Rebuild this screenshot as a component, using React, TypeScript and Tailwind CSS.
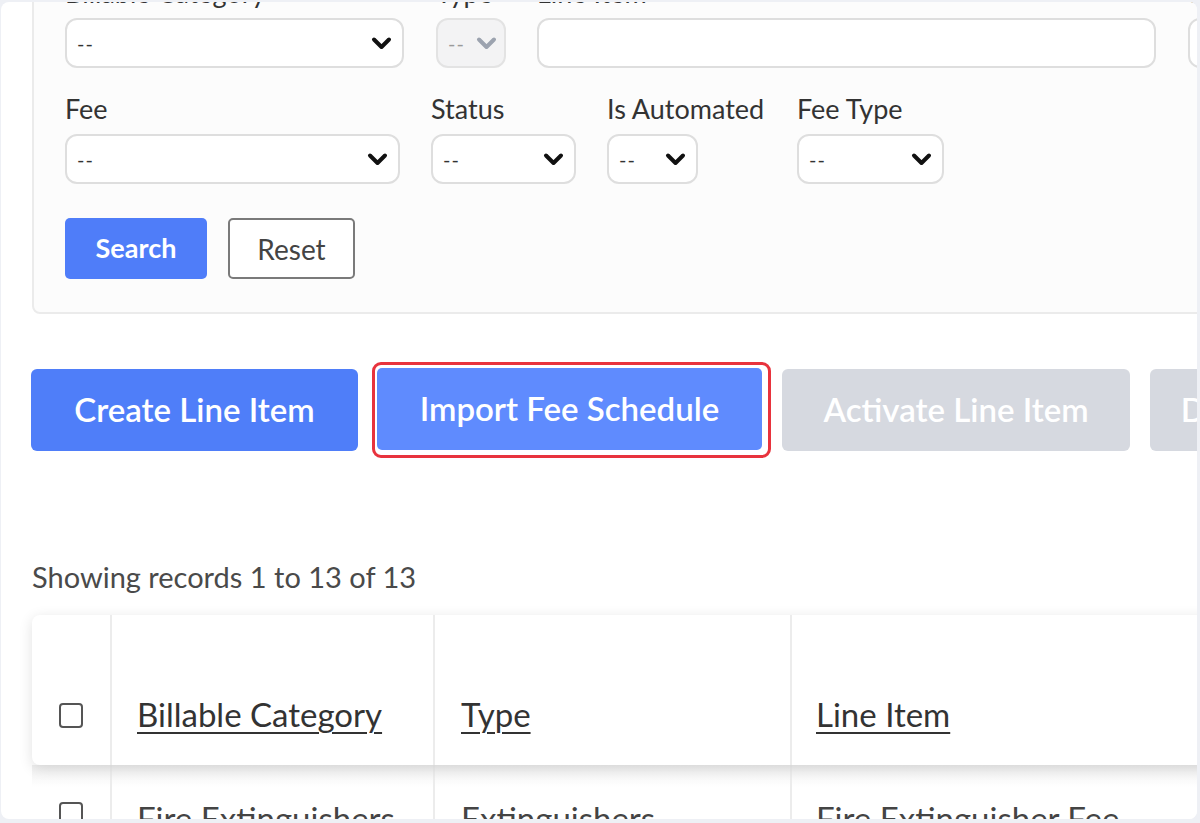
import React from 'react';

type SelectProps = {
  width: string;
  disabled?: boolean;
};

// chevron used by the select boxes
function Chevron({ muted = false }: { muted?: boolean }) {
  return (
    <svg width="21" height="14" viewBox="0 0 21 14" fill="none">
      <path
        d="M3 3.5l7.5 7.5 7.5-7.5"
        stroke={muted ? '#9ca3af' : '#111'}
        strokeWidth="4"
        strokeLinecap="round"
        strokeLinejoin="round"
      />
    </svg>
  );
}

function FakeSelect({ width, disabled = false }: SelectProps) {
  return (
    <div
      className={`${width} h-[50px] rounded-[12px] border-2 flex items-center justify-between pl-[10px] ${
        disabled
          ? 'pr-[7px] bg-[#f3f3f4] border-[#e3e3e3] text-[#9a9a9a]'
          : 'pr-[10px] bg-white border-[#dedede] text-[#333]'
      }`}
    >
      <span className="text-[20px] leading-none tracking-[1px]">--</span>
      <Chevron muted={disabled} />
    </div>
  );
}

function Field({ label, children, className = '' }: { label: string; children: React.ReactNode; className?: string }) {
  return (
    <div className={`flex flex-col ${className}`}>
      <div className="h-[30px] leading-[30px] text-[27px] text-[#333] mb-[10px] whitespace-nowrap">{label}</div>
      {children}
    </div>
  );
}

function Checkbox() {
  return <div className="w-[24px] h-[25px] rounded-[4px] border-2 border-[#555] bg-white" />;
}

export default function App() {
  return (
    <div className="w-[1200px] h-[823px] bg-[#eef0f5] pt-[2px] pl-[1px] pr-[3px] pb-[4px] overflow-hidden font-['Lato',sans-serif]">
      <div className="h-full bg-white rounded-[8px] overflow-hidden">
        {/* Filters */}
        <div className="ml-[31px] mt-[-42px] w-[1300px] bg-[#fcfcfc] border-2 border-[#ebebeb] rounded-[8px] pl-[31px] pt-[16px] pb-[33px]">
          <div className="flex">
            <Field label="Billable Category">
              <FakeSelect width="w-[339px]" />
            </Field>
            <Field label="Type" className="ml-[32px]">
              <FakeSelect width="w-[70px]" disabled />
            </Field>
            <Field label="Line Item" className="ml-[31px]">
              <div className="w-[619px] h-[50px] rounded-[12px] border-2 border-[#dedede] bg-white" />
            </Field>
            <Field label="Sort" className="ml-[32px]">
              <div className="w-[200px] h-[50px] rounded-[12px] border-2 border-[#dedede] bg-white" />
            </Field>
          </div>

          <div className="flex mt-[26px]">
            <Field label="Fee">
              <FakeSelect width="w-[335px]" />
            </Field>
            <Field label="Status" className="ml-[31px]">
              <FakeSelect width="w-[145px]" />
            </Field>
            <Field label="Is Automated" className="ml-[31px] w-[158px]">
              <FakeSelect width="w-[91px]" />
            </Field>
            <Field label="Fee Type" className="ml-[32px]">
              <FakeSelect width="w-[147px]" />
            </Field>
          </div>

          <div className="flex gap-[21px] mt-[34px]">
            <button className="w-[142px] h-[61px] rounded-[5px] bg-[#4f7df9] text-white text-[27px] font-bold">
              Search
            </button>
            <button className="w-[127px] h-[61px] rounded-[5px] border-2 border-[#7a7a7a] bg-white text-[#444] text-[28px]">
              Reset
            </button>
          </div>
        </div>

        {/* Bulk actions */}
        <div className="flex items-center ml-[30px] mt-[55px]">
          <button className="w-[327px] h-[82px] shrink-0 rounded-[6px] bg-[#4f7ef9] text-white text-[33px] font-semibold">
            Create Line Item
          </button>
          <div className="ml-[14px] shrink-0 rounded-[9px] border-[3px] border-[#e8333d] pl-[2px] pr-[6px] pt-[3px] pb-[5px] -my-[8px]">
            <button className="w-[385px] h-[82px] rounded-[5px] bg-[#5f8bfe] text-white text-[33px] font-semibold block">
              Import Fee Schedule
            </button>
          </div>
          <button className="ml-[11px] w-[348px] h-[82px] shrink-0 rounded-[6px] bg-[#d6d9e0] text-white text-[33px] font-semibold">
            Activate Line Item
          </button>
          <button className="ml-[20px] w-[220px] h-[82px] shrink-0 rounded-[6px] bg-[#d6d9e0] text-white text-[33px] font-semibold">
            Deactivate
          </button>
        </div>

        <div className="ml-[31px] mt-[110px] text-[29px] text-[#4a4a4a] leading-[32px]">
          Showing records 1 to 13 of 13
        </div>

        {/* Line items table */}
        <div className="ml-[31px] mt-[22px] w-[1300px]">
          <div className="flex h-[150px] bg-white rounded-[8px] shadow-[0_3px_14px_rgba(0,0,0,0.12)] relative z-10">
            <div className="w-[80px] border-r-2 border-[#ececec] flex items-end justify-center pb-[37px]">
              <Checkbox />
            </div>
            <div className="w-[323px] border-r-2 border-[#ececec] flex items-end pl-[25px] pb-[26px]">
              <span className="text-[33px] text-[#333] underline underline-offset-[5px] decoration-[2px]">Billable Category</span>
            </div>
            <div className="w-[357px] border-r-2 border-[#ececec] flex items-end pl-[26px] pb-[26px]">
              <span className="text-[33px] text-[#333] underline underline-offset-[5px] decoration-[2px]">Type</span>
            </div>
            <div className="flex-1 flex items-end pl-[24px] pb-[26px]">
              <span className="text-[33px] text-[#333] underline underline-offset-[5px] decoration-[2px]">Line Item</span>
            </div>
          </div>
          <div className="flex h-[150px] bg-gradient-to-b from-[#efefef] to-white to-[22px]">
            <div className="w-[80px] border-r-2 border-[#ececec] flex justify-center pt-[37px]">
              <Checkbox />
            </div>
            <div className="w-[323px] border-r-2 border-[#ececec] pl-[25px] pt-[29px] text-[33px] text-[#444]">
              Fire Extinguishers
            </div>
            <div className="w-[357px] border-r-2 border-[#ececec] pl-[26px] pt-[29px] text-[33px] text-[#444]">
              Extinguishers
            </div>
            <div className="flex-1 pl-[24px] pt-[29px] text-[33px] text-[#444]">Fire Extinguisher Fee</div>
          </div>
        </div>
      </div>
    </div>
  );
}
